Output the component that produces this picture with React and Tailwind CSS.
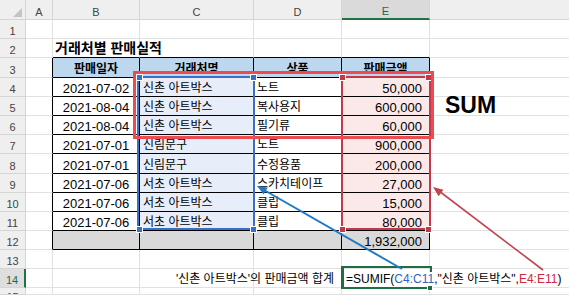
import React from 'react';

const FONT = "font-['Liberation_Sans','Noto_Sans_CJK_KR',sans-serif]";

// row 0 = column letters, then sheet rows 1..15
const HEIGHTS = [
  'h-[20px]', 'h-[19px]', 'h-[19px]', 'h-[20px]', 'h-[19px]', 'h-[19px]', 'h-[19px]', 'h-[19px]',
  'h-[20px]', 'h-[19px]', 'h-[19px]', 'h-[19px]', 'h-[19px]', 'h-[19px]', 'h-[19px]', 'h-[7px]',
];

const COLS = [
  { key: 'A', w: 'w-[27px] shrink-0' },
  { key: 'B', w: 'w-[87px] shrink-0' },
  { key: 'C', w: 'w-[114px] shrink-0' },
  { key: 'D', w: 'w-[88px] shrink-0' },
  { key: 'E', w: 'w-[88px] shrink-0' },
  { key: 'F', w: 'flex-1 min-w-0' },
];

const sales = [
  ['2021-07-02', '신촌 아트박스', '노트', '50,000'],
  ['2021-08-04', '신촌 아트박스', '복사용지', '600,000'],
  ['2021-08-04', '신촌 아트박스', '필기류', '60,000'],
  ['2021-07-01', '신림문구', '노트', '900,000'],
  ['2021-07-01', '신림문구', '수정용품', '200,000'],
  ['2021-07-06', '서초 아트박스', '스카치테이프', '27,000'],
  ['2021-07-06', '서초 아트박스', '클립', '15,000'],
  ['2021-07-06', '서초 아트박스', '클립', '80,000'],
];

const TABLE_COLS = ['B', 'C', 'D', 'E'];

function cellFrame(r, key) {
  const inTable = r >= 3 && r <= 12;
  const tcol = TABLE_COLS.includes(key);
  let right = 'border-r border-r-[#e1e1e1]';
  if (key === 'F') right = '';
  else if (inTable && (tcol || key === 'A')) right = 'border-r border-r-black';
  const bottom = r >= 2 && r <= 12 && tcol ? 'border-b border-b-black' : 'border-b border-b-[#e1e1e1]';
  let bg = '';
  if (r === 3 && tcol) bg = 'bg-[#bdd7ee]';
  else if (r === 12 && tcol) bg = 'bg-[#d9d9d9]';
  else if (r >= 4 && r <= 11 && key === 'C') bg = 'bg-[#e8eef9]';
  else if (r >= 4 && r <= 11 && key === 'E') bg = 'bg-[#fbe9ea]';
  return `${right} ${bottom} ${bg}`;
}

function cellContent(r, key) {
  if (r === 2 && key === 'B') {
    return (
      <div className="flex h-full items-end pl-[2px]">
        <span className="relative z-10 whitespace-nowrap text-[14px] font-bold leading-[18px]">거래처별 판매실적</span>
      </div>
    );
  }
  if (r === 3 && TABLE_COLS.includes(key)) {
    const label = { B: '판매일자', C: '거래처명', D: '상품', E: '판매금액' }[key];
    return (
      <div className="flex h-full items-end justify-center">
        <span className="text-[12px] font-bold leading-[15px]">{label}</span>
      </div>
    );
  }
  if (r >= 4 && r <= 11) {
    const row = sales[r - 4];
    if (key === 'B')
      return (
        <div className="flex h-full items-end justify-center">
          <span className="text-[13px] leading-[15px]">{row[0]}</span>
        </div>
      );
    if (key === 'C' || key === 'D')
      return (
        <div className="flex h-full items-end pl-[3px]">
          <span className="whitespace-nowrap text-[12px] leading-[15px]">{key === 'C' ? row[1] : row[2]}</span>
        </div>
      );
    if (key === 'E')
      return (
        <div className="flex h-full items-end justify-end pr-[7px]">
          <span className="text-[13px] leading-[15px]">{row[3]}</span>
        </div>
      );
  }
  if (r === 12 && key === 'E') {
    return (
      <div className="flex h-full items-end justify-end pr-[7px]">
        <span className="text-[13px] leading-[15px]">1,932,000</span>
      </div>
    );
  }
  if (r === 5 && key === 'F') {
    return (
      <div className="flex h-full items-end pl-[15px]">
        <span className="relative z-10 text-[23px] font-bold leading-[20px]">SUM</span>
      </div>
    );
  }
  if (r === 14 && key === 'D') {
    return (
      <div className="flex h-full items-end justify-end pr-[7px]">
        <span className="relative z-10 whitespace-nowrap text-[12px] leading-[15px]">'신촌 아트박스'의 판매금액 합계</span>
      </div>
    );
  }
  if (r === 14 && key === 'E') {
    return (
      <div className="flex h-full items-end pl-[4px]">
        <span className="relative z-30 whitespace-nowrap bg-white pr-[3px] text-[12px] leading-[15px]">
          =SUMIF(<span className="text-[#2f65c2]">C4:C11</span>,"신촌 아트박스",<span className="text-[#d0283c]">E4:E11</span>)
        </span>
      </div>
    );
  }
  return null;
}

function HeaderRow() {
  return (
    <div className={`flex ${HEIGHTS[0]}`}>
      <div className="relative w-[26px] shrink-0 border-r border-b border-[#d5d5d5] bg-[#efefef]">
        <svg className="absolute left-0 top-0" width="26" height="20" viewBox="0 0 26 20">
          <polygon points="22,8 22,17 13,17" fill="#c4c4c4" />
        </svg>
      </div>
      {COLS.map(c => (
        <div
          key={c.key}
          className={`${c.w} flex items-end justify-center ${
            c.key === 'E'
              ? 'border-r border-r-[#d5d5d5] border-b-2 border-b-[#217346] bg-[#dadada] text-[#1e6b44]'
              : c.key === 'F'
              ? 'border-b border-b-[#d5d5d5] bg-[#efefef]'
              : 'border-r border-b border-[#d5d5d5] bg-[#efefef] text-[#444]'
          }`}
        >
          {c.key !== 'F' && <span className="text-[11px] leading-[13px]">{c.key}</span>}
        </div>
      ))}
    </div>
  );
}

function SheetRow({ r }) {
  const active = r === 14;
  const last = r === 15;
  return (
    <div className={`flex ${HEIGHTS[r]}`}>
      <div
        className={`flex w-[26px] shrink-0 justify-center overflow-hidden border-b border-b-[#d5d5d5] ${
          last ? 'items-start pt-[3px]' : 'items-end'
        } ${
          active ? 'border-r-2 border-r-[#217346] bg-[#dedede] text-[#1e6b44]' : 'border-r border-r-[#d5d5d5] bg-[#efefef] text-[#444]'
        }`}
      >
        <span className="text-[11px] leading-[13px]">{r}</span>
      </div>
      {COLS.map(c => (
        <div key={c.key} className={`${c.w} ${cellFrame(r, c.key)}`}>
          {cellContent(r, c.key)}
        </div>
      ))}
    </div>
  );
}

function Handle({ className }) {
  return <div className={`absolute h-[7px] w-[7px] border border-white ${className}`} />;
}

export default function App() {
  const rows = Array.from({ length: 15 }, (_, i) => i + 1);
  return (
    <div className={`relative h-[295px] w-[569px] overflow-hidden bg-white text-black ${FONT}`}>
      <HeaderRow />
      {rows.map(r => (
        <SheetRow key={r} r={r} />
      ))}

      {/* range highlight C4:C11 */}
      <div className="absolute left-[137px] top-[76px] z-20 h-[154px] w-[118px] border-2 border-[#3a6fc8]" />
      <Handle className="left-[136px] top-[74px] z-20 bg-[#3a6fc8]" />
      <Handle className="left-[250px] top-[74px] z-20 bg-[#3a6fc8]" />
      <Handle className="left-[136px] top-[226px] z-20 bg-[#3a6fc8]" />
      <Handle className="left-[250px] top-[226px] z-20 bg-[#3a6fc8]" />

      {/* range highlight E4:E11 */}
      <div className="absolute left-[341px] top-[76px] z-20 h-[154px] w-[90px] border-2 border-[#c23a4a]" />
      <Handle className="left-[339px] top-[74px] z-20 bg-[#c23a4a]" />
      <Handle className="left-[425px] top-[74px] z-20 bg-[#c23a4a]" />
      <Handle className="left-[339px] top-[226px] z-20 bg-[#c23a4a]" />
      <Handle className="left-[425px] top-[226px] z-20 bg-[#c23a4a]" />

      {/* SUM annotation */}
      <div className="absolute left-[133px] top-[71px] z-20 h-[68px] w-[301px] border-[3px] border-[#ef4a50]" />

      {/* active cell E14 */}
      <div className="absolute left-[341px] top-[266px] z-20 h-[23px] w-[91px] border-2 border-l-[3px] border-[#1e6e42]" />
      <div className="absolute left-[427px] top-[285px] z-40 h-[6px] w-[6px] border border-white bg-[#1e6e42]" />

      <svg className="pointer-events-none absolute left-0 top-0 z-40" width="569" height="295" viewBox="0 0 569 295">
        <line x1="402" y1="269" x2="264" y2="190" stroke="#1f7bc7" strokeWidth="2" />
        <polygon points="257,186 267.7,187.5 263.7,194.5" fill="#1f7bc7" />
        <line x1="543" y1="270" x2="439" y2="191" stroke="#c0454f" strokeWidth="1.6" />
        <polygon points="433,187 443.4,189.8 438.6,196.2" fill="#c0454f" />
      </svg>
    </div>
  );
}
